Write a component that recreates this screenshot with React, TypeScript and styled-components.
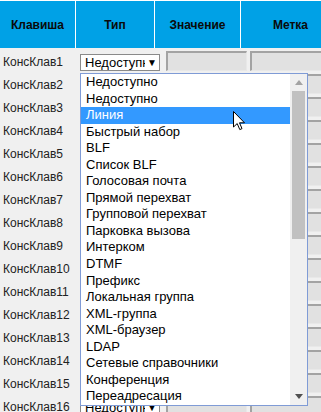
import React from 'react';
import styled, { createGlobalStyle } from 'styled-components';

const GlobalStyle = createGlobalStyle`
  html, body {
    margin: 0;
    padding: 0;
    background: #f0f0f0;
    overflow: hidden;
  }
  body {
    font-family: "Liberation Sans", Arial, sans-serif;
  }
`;

const Page = styled.div`
  position: relative;
  width: 321px;
  height: 412px;
  overflow: hidden;
  background: #f0f0f0;
`;

const Header = styled.div`
  display: grid;
  grid-template-columns: 75px 78px 85px 1fr;
  column-gap: 1px;
  padding-top: 1px;
  background: #ffffff;
  width: 340px;
`;

const HeadCell = styled.div`
  height: 47px;
  background: #00a1e6;
  color: #0a0a0a;
  font-size: 12px;
  font-weight: 700;
  display: flex;
  align-items: center;
  justify-content: center;
  padding-top: 1px;
  box-sizing: border-box;
`;

const Row = styled.div`
  display: grid;
  grid-template-columns: 80px 86px 84px 90px;
  align-items: end;
  height: 23px;
  width: 340px;
`;

const KeyLabel = styled.div`
  padding: 0 0 1px 3px;
  font-size: 12px;
  color: #222;
  line-height: 16px;
`;

const SelectBox = styled.div`
  box-sizing: border-box;
  width: 80px;
  height: 17px;
  background: #fff;
  border: 1px solid #8a8a8a;
  display: flex;
  align-items: center;
  font-size: 13px;
  color: #000;
  padding-left: 4px;
  overflow: hidden;
`;

const SelectText = styled.span`
  flex: 1;
  overflow: hidden;
  white-space: nowrap;
  line-height: 15px;
`;

const SelectArrow = styled.span`
  font-size: 10px;
  width: 14px;
  text-align: center;
  color: #000;
`;

const Field = styled.div<{ $width: number }>`
  box-sizing: border-box;
  width: ${p => p.$width}px;
  height: 20px;
  background: #e1e1e1;
  border-style: solid;
  border-width: 2px 1px 1px 2px;
  border-color: #a3a3a3 #e8e8e8 #e8e8e8 #a3a3a3;
`;

const Dropdown = styled.div`
  position: absolute;
  left: 80px;
  top: 73px;
  width: 228px;
  height: 333px;
  box-sizing: border-box;
  border: 1px solid #7f9bd6;
  background: #fff;
  display: flex;
`;

const List = styled.div`
  flex: 1;
  display: flex;
  flex-direction: column;
`;

const Option = styled.div<{ $active?: boolean }>`
  height: 16.55px;
  line-height: 16.55px;
  padding-left: 5px;
  font-size: 13px;
  white-space: nowrap;
  color: ${p => (p.$active ? '#fff' : '#000')};
  background: ${p => (p.$active ? '#3399ff' : 'transparent')};
`;

const Scrollbar = styled.div`
  width: 17px;
  background: #f0f0f0;
  display: flex;
  flex-direction: column;
  align-items: center;
`;

const ScrollArrow = styled.div<{ $dark?: boolean }>`
  height: 17px;
  width: 17px;
  display: flex;
  align-items: center;
  justify-content: center;
  color: ${p => (p.$dark ? '#505050' : '#a3a3a3')};
`;

const Track = styled.div`
  flex: 1;
  width: 13px;
`;

const Thumb = styled.div`
  height: 148px;
  width: 13px;
  background: #c1c1c1;
`;

const Cursor = styled.svg`
  position: absolute;
  left: 233px;
  top: 111px;
`;

const options = [
  'Недоступно',
  'Недоступно',
  'Линия',
  'Быстрый набор',
  'BLF',
  'Список BLF',
  'Голосовая почта',
  'Прямой перехват',
  'Групповой перехват',
  'Парковка вызова',
  'Интерком',
  'DTMF',
  'Префикс',
  'Локальная группа',
  'XML-группа',
  'XML-браузер',
  'LDAP',
  'Сетевые справочники',
  'Конференция',
  'Переадресация',
];

const keys = Array.from({ length: 16 }, (_, i) => `КонсКлав${i + 1}`);

const Triangle = ({ up }: { up?: boolean }) => (
  <svg width="8" height="5" viewBox="0 0 8 5">
    <path d={up ? 'M0 5 L4 0 L8 5 Z' : 'M0 0 L8 0 L4 5 Z'} fill="currentColor" />
  </svg>
);

export default function App() {
  return (
    <Page>
      <GlobalStyle />
      <Header>
        <HeadCell>Клавиша</HeadCell>
        <HeadCell>Тип</HeadCell>
        <HeadCell>Значение</HeadCell>
        <HeadCell>Метка</HeadCell>
      </Header>
      {keys.map(k => (
        <Row key={k}>
          <KeyLabel>{k}</KeyLabel>
          <div>
            <SelectBox>
              <SelectText>Недоступно</SelectText>
              <SelectArrow>▼</SelectArrow>
            </SelectBox>
          </div>
          <Field $width={81} />
          <Field $width={90} />
        </Row>
      ))}
      <Dropdown>
        <List>
          {options.map((o, i) => (
            <Option key={i} $active={i === 2}>
              {o}
            </Option>
          ))}
        </List>
        <Scrollbar>
          <ScrollArrow>
            <Triangle up />
          </ScrollArrow>
          <Track>
            <Thumb />
          </Track>
          <ScrollArrow $dark>
            <Triangle />
          </ScrollArrow>
        </Scrollbar>
      </Dropdown>
      <Cursor width="13" height="20" viewBox="0 0 13 20">
        <path
          d="M0.5 0.5 L0.5 16 L4.2 12.6 L6.8 18.6 L9 17.6 L6.5 11.8 L11.5 11.8 Z"
          fill="#fff"
          stroke="#000"
          strokeWidth="1"
        />
      </Cursor>
    </Page>
  );
}
